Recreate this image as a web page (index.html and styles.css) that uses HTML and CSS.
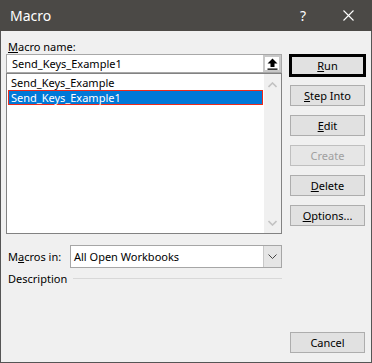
FILE: index.html
```html
<!DOCTYPE html>
<html lang="en">
<head>
  <meta charset="UTF-8">
  <title>Macro</title>
  <link rel="stylesheet" href="styles.css">
</head>
<body>
  <div class="window">
    <div class="titlebar">
      <span class="title">Macro</span>
      <span class="help">?</span>
      <svg class="close" width="11" height="11" viewBox="0 0 11 11">
        <path d="M0.5 0.5 L10.5 10.5 M10.5 0.5 L0.5 10.5" stroke="#fff" stroke-width="1.1" fill="none"/>
      </svg>
    </div>

    <div class="content">
      <div class="left">
        <div class="label"><u>M</u>acro name:</div>
        <div class="namebox">
          <span class="nametext">Send_Keys_Example1</span>
          <span class="upbtn">
            <svg width="11" height="12" viewBox="0 0 11 12">
              <path d="M5.5 0.5 L10.5 5.5 L7.5 5.5 L7.5 9 L3.5 9 L3.5 5.5 L0.5 5.5 Z" fill="#000"/>
              <rect x="0.5" y="10.5" width="10" height="1.3" fill="#000"/>
            </svg>
          </span>
        </div>
        <div class="list">
          <div class="items">
            <div class="item">Send_Keys_Example</div>
            <div class="item selected">Send_Keys_Example1</div>
          </div>
          <div class="scroll">
            <svg width="9" height="6" viewBox="0 0 9 6"><path d="M0.5 5 L4.5 1 L8.5 5" stroke="#c2c2c2" stroke-width="1.6" fill="none"/></svg>
            <svg width="9" height="6" viewBox="0 0 9 6"><path d="M0.5 1 L4.5 5 L8.5 1" stroke="#c2c2c2" stroke-width="1.6" fill="none"/></svg>
          </div>
        </div>
        <div class="inrow">
          <span class="inlabel">M<u>a</u>cros in:</span>
          <div class="combo">
            <span class="combotext">All Open Workbooks</span>
            <span class="dropbtn">
              <svg width="9" height="5" viewBox="0 0 9 5"><path d="M0.5 0.5 L4.5 4.5 L8.5 0.5" stroke="#444" stroke-width="1" fill="none"/></svg>
            </span>
          </div>
        </div>
        <div class="descrow">
          <span>Description</span>
          <span class="rule"></span>
        </div>
      </div>

      <div class="right">
        <button class="btn default"><u>R</u>un</button>
        <button class="btn"><u>S</u>tep Into</button>
        <button class="btn"><u>E</u>dit</button>
        <button class="btn disabled">Create</button>
        <button class="btn"><u>D</u>elete</button>
        <button class="btn"><u>O</u>ptions...</button>
        <button class="btn cancel">Cancel</button>
      </div>
    </div>
  </div>
</body>
</html>
```

FILE: styles.css
```css
/* Excel macro dialog */
body {
  margin: 0;
  font-family: "Noto Sans", "Open Sans", sans-serif;
  font-size: 11px;
  color: #000;
}

.window {
  width: 372px;
  height: 363px;
  box-sizing: border-box;
  border: 1px solid #555;
  border-top: none;
  background-color: #f0f0f0;
  display: flex;
  flex-direction: column;
}

.titlebar {
  height: 31px;
  margin: 0 -1px;
  background-color: #4b4946;
  color: #fff;
  display: flex;
  align-items: center;
  padding: 0 18px 0 10px;
  font-size: 14px;
}

.title {
  flex: 1;
}

.help {
  margin-right: 37px;
}

.content {
  flex: 1;
  display: flex;
  padding: 8px 6px 0 5px;
}

.left {
  width: 276px;
  display: flex;
  flex-direction: column;
}

.label {
  height: 15px;
  line-height: 15px;
  padding-left: 2px;
}

.namebox {
  height: 19px;
  box-sizing: border-box;
  border: 1px solid #a8a8a8;
  background: #fff;
  display: flex;
  align-items: center;
}

.nametext {
  flex: 1;
  padding-left: 5px;
}

.upbtn {
  width: 18px;
  height: 17px;
  box-sizing: border-box;
  border: 2px solid #c8c8c8;
  background: #fff;
  display: flex;
  align-items: center;
  justify-content: center;
}

.list {
  height: 161px;
  box-sizing: border-box;
  border: 1px solid #828282;
  background: #fff;
  display: flex;
}

.items {
  flex: 1;
  padding: 1px 1px 0 1px;
}

.item {
  height: 15px;
  line-height: 15px;
  padding-left: 3px;
}

.item.selected {
  box-sizing: border-box;
  line-height: 13px;
  padding-left: 2px;
  background-color: #0078d7;
  color: #fff;
  border: 1px solid #ee2a1a;
}

.scroll {
  width: 17px;
  background: #f0f0f0;
  display: flex;
  flex-direction: column;
  justify-content: space-between;
  align-items: center;
  padding: 8px 0 7px;
}

.inrow {
  margin-top: 11px;
  display: flex;
  align-items: center;
}

.inlabel {
  width: 62px;
  padding-left: 2px;
}

.combo {
  flex: 1;
  height: 23px;
  box-sizing: border-box;
  border: 1px solid #a6a6a6;
  background: #fff;
  display: flex;
  align-items: center;
}

.combotext {
  flex: 1;
  padding-left: 3px;
}

.dropbtn {
  width: 17px;
  height: 21px;
  background: #e5e5e5;
  border-left: 1px solid #c8c8c8;
  display: flex;
  align-items: center;
  justify-content: center;
}

.descrow {
  margin-top: 3px;
  display: flex;
  align-items: center;
  gap: 6px;
  padding-left: 2px;
  height: 15px;
}

.rule {
  flex: 1;
  border-top: 1px solid #d8d8d8;
}

.right {
  width: 75px;
  margin-left: 8px;
  padding: 15px 0 9px;
  display: flex;
  flex-direction: column;
}

.btn {
  height: 21px;
  margin-bottom: 9px;
  padding: 0;
  border: 1px solid #adadad;
  background-color: #e1e1e1;
  font: inherit;
  color: #000;
}

.btn.default {
  border: 3px solid #000;
  height: 23px;
  margin: 0 -1px 8px;
}

.btn.disabled {
  color: #a0a0a0;
  border-color: #bfbfbf;
  background-color: #e6e6e6;
}

.btn.cancel {
  margin: auto 0 0;
}
```
